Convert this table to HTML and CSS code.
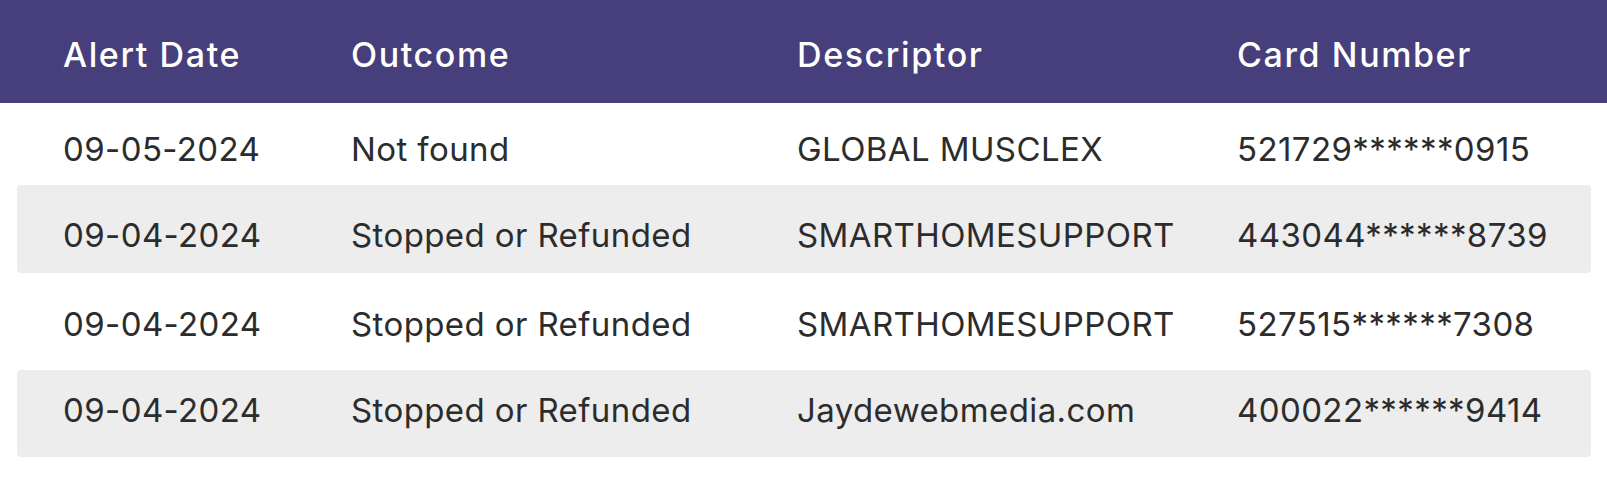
FILE: index.html
```html
<!DOCTYPE html>
<html lang="en">
<head>
<meta charset="utf-8">
<title>Alerts</title>
<link rel="stylesheet" href="styles.css">
</head>
<body>
<div class="alerts">
  <div class="alerts-head">
    <div class="cell">Alert Date</div>
    <div class="cell">Outcome</div>
    <div class="cell">Descriptor</div>
    <div class="cell">Card Number</div>
  </div>
  <div class="alerts-body">
    <div class="row">
      <div class="cell">09-05-2024</div>
      <div class="cell">Not found</div>
      <div class="cell">GLOBAL MUSCLEX</div>
      <div class="cell">521729******0915</div>
    </div>
    <div class="row">
      <div class="cell">09-04-2024</div>
      <div class="cell">Stopped or Refunded</div>
      <div class="cell">SMARTHOMESUPPORT</div>
      <div class="cell">443044******8739</div>
    </div>
    <div class="row">
      <div class="cell">09-04-2024</div>
      <div class="cell">Stopped or Refunded</div>
      <div class="cell">SMARTHOMESUPPORT</div>
      <div class="cell">527515******7308</div>
    </div>
    <div class="row">
      <div class="cell">09-04-2024</div>
      <div class="cell">Stopped or Refunded</div>
      <div class="cell">Jaydewebmedia.com</div>
      <div class="cell">400022******9414</div>
    </div>
  </div>
</div>
</body>
</html>
```
FILE: styles.css
```css
html, body {
  margin: 0;
  padding: 0;
  background: #ffffff;
}

body {
  font-family: Inter, "Open Sans", sans-serif;
  font-size: 33px;
  line-height: 40px;
  letter-spacing: 0.4px;
  color: #2c2c2c;
}

.alerts {
  width: 1607px;
}

.alerts-head {
  display: grid;
  grid-template-columns: 288px 446px 440px 1fr;
  height: 103px;
  box-sizing: border-box;
  padding: 35px 0 0 63px;
  background: #463f7b;
  color: #ffffff;
  font-size: 34px;
  font-weight: 500;
  letter-spacing: 1.6px;
}

.alerts-body {
  display: flex;
  flex-direction: column;
  padding: 0 16px 0 17px;
}

.row {
  display: grid;
  grid-template-columns: 288px 446px 440px 1fr;
  box-sizing: border-box;
  padding-left: 46px;
  border-radius: 4px;
}

.row:nth-child(even) {
  background: #ededed;
}

.row:nth-child(1) {
  height: 82px;
  padding-top: 26px;
}

.row:nth-child(2) {
  height: 88px;
  padding-top: 30px;
}

.row:nth-child(3) {
  height: 97px;
  padding-top: 31px;
}

.row:nth-child(4) {
  height: 87px;
  padding-top: 20px;
}

.cell {
  white-space: nowrap;
}
```
